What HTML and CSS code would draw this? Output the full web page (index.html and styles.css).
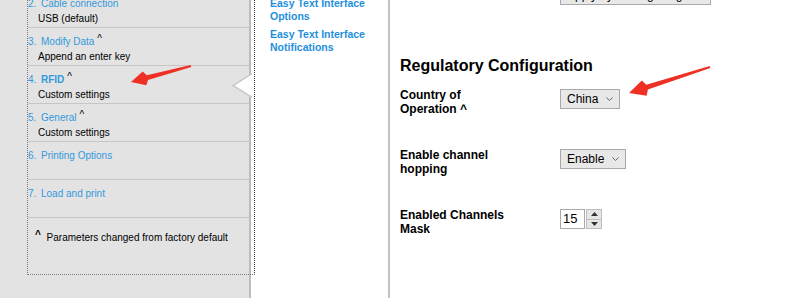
FILE: index.html
```html
<!DOCTYPE html>
<html lang="en">
<head>
    <meta charset="UTF-8">
    <meta name="viewport" content="width=device-width, initial-scale=1.0">
    <title>Printer Setup - RFID</title>
    <link rel="stylesheet" href="styles.css">
</head>
<body>
    <div class="page">

        <aside class="sidebar">
            <div class="steps">
                <div class="step">
                    <div class="step-title"><span class="num">2.</span><a href="#">Cable connection</a></div>
                    <div class="step-sub">USB (default)</div>
                </div>
                <div class="step">
                    <div class="step-title"><span class="num">3.</span><a href="#">Modify Data</a><sup class="chg">^</sup></div>
                    <div class="step-sub">Append an enter key</div>
                </div>
                <div class="step active">
                    <div class="step-title"><span class="num">4.</span><a href="#">RFID</a><sup class="chg">^</sup></div>
                    <div class="step-sub">Custom settings</div>
                    <svg class="notch" width="20" height="25" viewBox="0 0 20 25">
                        <polygon points="20,0 1,12.5 20,25" fill="#fff" />
                        <polyline points="20,0.5 1,12.5 20,24.5" fill="none" stroke="#c9c9c9" stroke-width="1.5" />
                    </svg>
                </div>
                <div class="step">
                    <div class="step-title"><span class="num">5.</span><a href="#">General</a><sup class="chg">^</sup></div>
                    <div class="step-sub">Custom settings</div>
                </div>
                <div class="step">
                    <div class="step-title"><span class="num">6.</span><a href="#">Printing Options</a></div>
                </div>
                <div class="step">
                    <div class="step-title"><span class="num">7.</span><a href="#">Load and print</a></div>
                </div>
                <div class="legend"><b>^</b> Parameters changed from factory default</div>
            </div>
        </aside>

        <nav class="subnav">
            <a href="#">Easy Text Interface Options</a>
            <a href="#">Easy Text Interface Notifications</a>
        </nav>

        <main class="content">
            <div class="select wide"><span>Apply by Setting Program</span></div>

            <h2>Regulatory Configuration</h2>

            <div class="form-row">
                <label>Country of<br>Operation ^</label>
                <div class="select">
                    <span>China</span>
                    <svg width="7" height="4" viewBox="0 0 7 4"><polyline points="0.5,0.5 3.5,3.5 6.5,0.5" fill="none" stroke="#666" stroke-width="1" /></svg>
                </div>
            </div>

            <div class="form-row">
                <label>Enable channel<br>hopping</label>
                <div class="select">
                    <span>Enable</span>
                    <svg width="7" height="4" viewBox="0 0 7 4"><polyline points="0.5,0.5 3.5,3.5 6.5,0.5" fill="none" stroke="#666" stroke-width="1" /></svg>
                </div>
            </div>

            <div class="form-row">
                <label>Enabled Channels<br>Mask</label>
                <div class="spin">
                    <div class="spin-value">15</div>
                    <div class="spin-buttons">
                        <div class="spin-btn"><svg width="7" height="4" viewBox="0 0 7 4"><polygon points="0,4 3.5,0 7,4" fill="#333" /></svg></div>
                        <div class="spin-btn"><svg width="7" height="4" viewBox="0 0 7 4"><polygon points="0,0 3.5,4 7,0" fill="#333" /></svg></div>
                    </div>
                </div>
            </div>
        </main>

        <!-- red annotation arrows drawn over the screenshot -->
        <svg class="arrows" width="795" height="298" viewBox="0 0 795 298">
            <polygon points="131,82 142.7,71.6 146.8,75.2 190.7,65 191.3,67 148,80 146.3,85.2" fill="#ee3124" />
            <polygon points="629,93 641.8,80.5 646.3,84.8 709.7,66 710.3,68 647.9,89.6 646.6,95.7" fill="#ee3124" />
        </svg>
    </div>
</body>
</html>
```

FILE: styles.css
```css
*{
    margin: 0;
    padding: 0;
    box-sizing: border-box;
}

body{
    background-color: #fff;
    font-family: "Liberation Sans", Arial, sans-serif;
    color: #000;
}

a{
    text-decoration: none;
}

.page{
    position: relative;
    display: flex;
    width: 795px;
    height: 298px;
    overflow: hidden;
}

/* left wizard steps */
.sidebar{
    width: 251px;
    flex-shrink: 0;
    background-color: #e3e3e3;
    border-right: 2px solid #bdbdbd;
}

.steps{
    position: relative;
    margin-top: -10px;
    margin-left: 27px;
    width: 228px;
    border-left: 1px dotted #7a7a7a;
    border-right: 1px dotted #333;
    border-bottom: 1px dotted #7a7a7a;
    font-size: 10px;
}

.step{
    position: relative;
    height: 38px;
    margin-right: 5px;
    padding-top: 6px;
    line-height: 15px;
    border-bottom: 1px solid #c6c6c6;
}

.step-title{
    color: #3399dd;
}

.step-title a{
    color: #3399dd;
}

.step.active .step-title a{
    font-weight: bold;
}

.num{
    display: inline-block;
    width: 13px;
}

.chg{
    font-size: 10px;
    color: #000;
    margin-left: 3px;
    vertical-align: 3px;
    line-height: 0;
}

.step-sub{
    padding-left: 10px;
}

.notch{
    position: absolute;
    right: -3px;
    top: 7px;
    display: block;
}

.legend{
    height: 56px;
    padding: 12px 0 0 7px;
    line-height: 15px;
}

.legend b{
    position: relative;
    top: -3px;
    margin-right: 3px;
}

/* middle sub navigation */
.subnav{
    width: 139px;
    flex-shrink: 0;
    border-right: 2px solid #c3c3c3;
    padding: 0 0 0 19px;
    margin-top: -3px;
    display: flex;
    flex-direction: column;
    gap: 5px;
}

.subnav a{
    color: #1e8fdc;
    font-weight: bold;
    font-size: 10.5px;
    line-height: 13px;
}

/* right form */
.content{
    flex: 1;
    padding-left: 10px;
}

.select{
    display: inline-flex;
    align-items: center;
    gap: 8px;
    height: 20px;
    padding: 0 6px;
    background-color: #e8e8e8;
    border: 1px solid #a9a9a9;
    font-size: 12px;
    line-height: 18px;
}

.select svg{
    display: block;
}

.select.wide{
    display: flex;
    width: 151px;
    margin-left: 160px;
    margin-top: -15px;
    overflow: hidden;
}

.content h2{
    margin-top: 51px;
    margin-bottom: 14px;
    font-size: 16px;
    line-height: 19px;
}

.form-row{
    display: grid;
    grid-template-columns: 160px auto;
    align-items: start;
    height: 60px;
}

.form-row label{
    font-size: 12px;
    font-weight: bold;
    line-height: 13.5px;
}

.form-row > div{
    justify-self: start;
}

.spin{
    display: flex;
    gap: 1px;
}

.spin-value{
    width: 25px;
    height: 20px;
    border: 1px solid #a9a9a9;
    background-color: #fff;
    font-size: 13px;
    line-height: 18px;
    padding-left: 2px;
}

.spin-buttons{
    display: flex;
    flex-direction: column;
    width: 16px;
    height: 20px;
}

.spin-btn{
    flex: 1;
    display: flex;
    align-items: center;
    justify-content: center;
    background-color: #e6e6e6;
    border: 1px solid #bdbdbd;
}

.spin-btn + .spin-btn{
    border-top: none;
}

.spin-btn svg{
    display: block;
}

.arrows{
    position: absolute;
    left: 0;
    top: 0;
    pointer-events: none;
}
```
